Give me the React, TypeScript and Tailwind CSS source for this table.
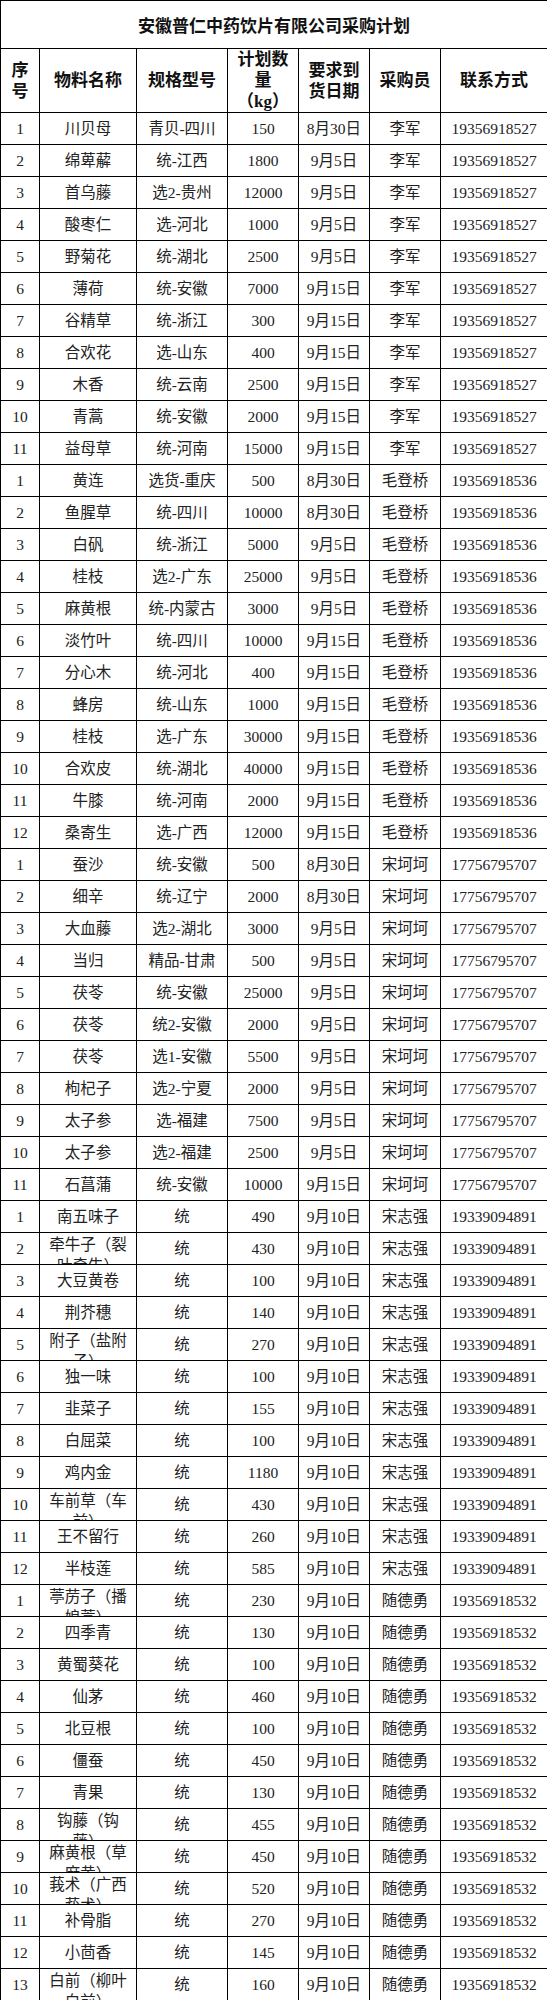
type Row = [string, string, string, string, string]

// names containing "|" wrap onto a second line that the row height clips
const groups: { buyer: string; phone: string; rows: Row[] }[] = [
  {
    buyer: '李军',
    phone: '19356918527',
    rows: [
      ['1', '川贝母', '青贝-四川', '150', '8月30日'],
      ['2', '绵萆薢', '统-江西', '1800', '9月5日'],
      ['3', '首乌藤', '选2-贵州', '12000', '9月5日'],
      ['4', '酸枣仁', '选-河北', '1000', '9月5日'],
      ['5', '野菊花', '统-湖北', '2500', '9月5日'],
      ['6', '薄荷', '统-安徽', '7000', '9月15日'],
      ['7', '谷精草', '统-浙江', '300', '9月15日'],
      ['8', '合欢花', '选-山东', '400', '9月15日'],
      ['9', '木香', '统-云南', '2500', '9月15日'],
      ['10', '青蒿', '统-安徽', '2000', '9月15日'],
      ['11', '益母草', '统-河南', '15000', '9月15日'],
    ],
  },
  {
    buyer: '毛登桥',
    phone: '19356918536',
    rows: [
      ['1', '黄连', '选货-重庆', '500', '8月30日'],
      ['2', '鱼腥草', '统-四川', '10000', '8月30日'],
      ['3', '白矾', '统-浙江', '5000', '9月5日'],
      ['4', '桂枝', '选2-广东', '25000', '9月5日'],
      ['5', '麻黄根', '统-内蒙古', '3000', '9月5日'],
      ['6', '淡竹叶', '统-四川', '10000', '9月15日'],
      ['7', '分心木', '统-河北', '400', '9月15日'],
      ['8', '蜂房', '统-山东', '1000', '9月15日'],
      ['9', '桂枝', '选-广东', '30000', '9月15日'],
      ['10', '合欢皮', '统-湖北', '40000', '9月15日'],
      ['11', '牛膝', '统-河南', '2000', '9月15日'],
      ['12', '桑寄生', '选-广西', '12000', '9月15日'],
    ],
  },
  {
    buyer: '宋坷坷',
    phone: '17756795707',
    rows: [
      ['1', '蚕沙', '统-安徽', '500', '8月30日'],
      ['2', '细辛', '统-辽宁', '2000', '8月30日'],
      ['3', '大血藤', '选2-湖北', '3000', '9月5日'],
      ['4', '当归', '精品-甘肃', '500', '9月5日'],
      ['5', '茯苓', '统-安徽', '25000', '9月5日'],
      ['6', '茯苓', '统2-安徽', '2000', '9月5日'],
      ['7', '茯苓', '选1-安徽', '5500', '9月5日'],
      ['8', '枸杞子', '选2-宁夏', '2000', '9月5日'],
      ['9', '太子参', '选-福建', '7500', '9月5日'],
      ['10', '太子参', '选2-福建', '2500', '9月5日'],
      ['11', '石菖蒲', '统-安徽', '10000', '9月15日'],
    ],
  },
  {
    buyer: '宋志强',
    phone: '19339094891',
    rows: [
      ['1', '南五味子', '统', '490', '9月10日'],
      ['2', '牵牛子（裂|叶牵牛）', '统', '430', '9月10日'],
      ['3', '大豆黄卷', '统', '100', '9月10日'],
      ['4', '荆芥穗', '统', '140', '9月10日'],
      ['5', '附子（盐附|子）', '统', '270', '9月10日'],
      ['6', '独一味', '统', '100', '9月10日'],
      ['7', '韭菜子', '统', '155', '9月10日'],
      ['8', '白屈菜', '统', '100', '9月10日'],
      ['9', '鸡内金', '统', '1180', '9月10日'],
      ['10', '车前草（车|前）', '统', '430', '9月10日'],
      ['11', '王不留行', '统', '260', '9月10日'],
      ['12', '半枝莲', '统', '585', '9月10日'],
    ],
  },
  {
    buyer: '随德勇',
    phone: '19356918532',
    rows: [
      ['1', '葶苈子（播|娘蒿）', '统', '230', '9月10日'],
      ['2', '四季青', '统', '130', '9月10日'],
      ['3', '黄蜀葵花', '统', '100', '9月10日'],
      ['4', '仙茅', '统', '460', '9月10日'],
      ['5', '北豆根', '统', '100', '9月10日'],
      ['6', '僵蚕', '统', '450', '9月10日'],
      ['7', '青果', '统', '130', '9月10日'],
      ['8', '钩藤（钩|藤）', '统', '455', '9月10日'],
      ['9', '麻黄根（草|麻黄）', '统', '450', '9月10日'],
      ['10', '莪术（广西|莪术）', '统', '520', '9月10日'],
      ['11', '补骨脂', '统', '270', '9月10日'],
      ['12', '小茴香', '统', '145', '9月10日'],
      ['13', '白前（柳叶|白前）', '统', '160', '9月10日'],
    ],
  },
]

const cols = 'grid grid-cols-[39px_97px_91px_71px_71px_71px_1fr]'

function Cell({ children, last, wrap }: { children: React.ReactNode; last?: boolean; wrap?: boolean }) {
  return (
    <div
      className={`flex h-[32px] justify-center overflow-hidden border-b border-black px-[3px] text-center leading-[21px] ${
        wrap ? 'items-start pt-[1px]' : 'items-center'
      } ${last ? '' : 'border-r'}`}
    >
      <div>{children}</div>
    </div>
  )
}

function Name({ text }: { text: string }) {
  const parts = text.split('|')
  if (parts.length === 1) return <Cell>{text}</Cell>
  return (
    <Cell wrap>
      <div className="whitespace-nowrap">{parts[0]}</div>
      <div className="whitespace-nowrap">{parts[1]}</div>
    </Cell>
  )
}

function HeadCell({ lines, last }: { lines: string[]; last?: boolean }) {
  return (
    <div
      className={`flex h-[64px] flex-col items-center justify-center border-b border-black text-center leading-[21px] ${
        last ? '' : 'border-r'
      }`}
    >
      {lines.map((l) => (
        <div key={l} className="whitespace-nowrap">
          {l}
        </div>
      ))}
    </div>
  )
}

export default function App() {
  return (
    <div className="w-[547px] overflow-hidden bg-white font-['Liberation_Serif','Noto_Sans_CJK_SC',serif] text-[#222]">
      {/* Title */}
      <div className="flex h-[49px] items-center justify-center border-b border-l border-t border-black pt-[4px] text-[17px] font-bold text-[#111]">
        安徽普仁中药饮片有限公司采购计划
      </div>

      {/* Column headers */}
      <div className={`${cols} border-l border-black text-[17px] font-bold text-[#111]`}>
        <HeadCell lines={['序', '号']} />
        <HeadCell lines={['物料名称']} />
        <HeadCell lines={['规格型号']} />
        <HeadCell lines={['计划数', '量', '（kg）']} />
        <HeadCell lines={['要求到', '货日期']} />
        <HeadCell lines={['采购员']} />
        <HeadCell lines={['联系方式']} last />
      </div>

      {/* Data rows */}
      <div className={`${cols} border-l border-black text-[15.5px]`}>
        {groups.flatMap((g) =>
          g.rows.map((r, i) => (
            <div key={g.buyer + i} className="contents">
              <Cell>{r[0]}</Cell>
              <Name text={r[1]} />
              <Cell>{r[2]}</Cell>
              <Cell>{r[3]}</Cell>
              <Cell>{r[4]}</Cell>
              <Cell>{g.buyer}</Cell>
              <Cell last>{g.phone}</Cell>
            </div>
          ))
        )}
      </div>
    </div>
  )
}
